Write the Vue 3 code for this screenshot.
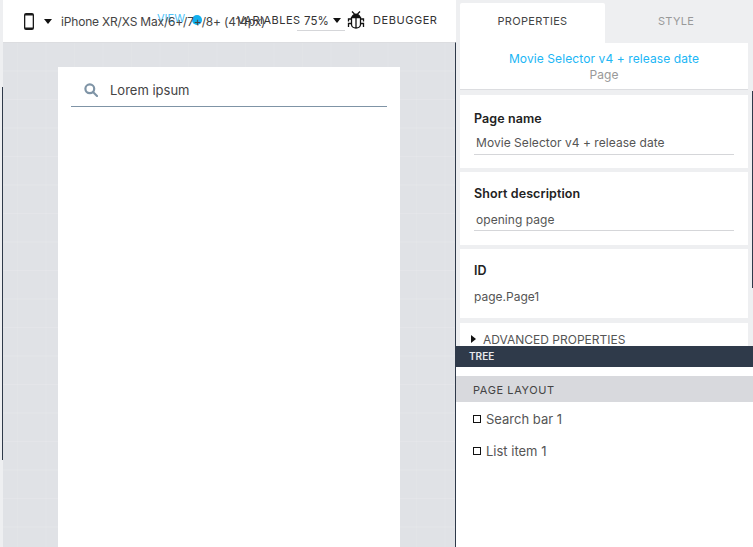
<script setup>
const cards = [
  { label: 'Page name', value: 'Movie Selector v4 + release date', field: true, cls: 'c-name' },
  { label: 'Short description', value: 'opening page', field: true, cls: 'c-desc' },
  { label: 'ID', value: 'page.Page1', field: false, cls: 'c-id' }
]
const items = ['Search bar 1', 'List item 1']
</script>

<template>
  <div class="app">
    <section class="left">
      <header class="toolbar">
        <svg class="phone" width="10" height="17" viewBox="0 0 10 17">
          <path fill="#1a1a1a" fill-rule="evenodd" d="M2 0h6a2 2 0 0 1 2 2v13a2 2 0 0 1-2 2H2a2 2 0 0 1-2-2V2a2 2 0 0 1 2-2zM1.300 2.500v12h7.400v-12z" />
        </svg>
        <span class="caret first"></span>
        <div class="overlay">
          <span class="view">VIEW</span>
          <span class="dot"></span>
          <span class="vars">VARIABLES</span>
        </div>
        <span class="device">iPhone XR/XS Max/6+/7+/8+ (414px)</span>
        <div class="zoom"><span>75%</span><span class="caret"></span></div>
        <svg class="bug" width="18" height="18" viewBox="0 0 18 18" fill="none" stroke="#111" stroke-width="1.300">
          <path d="M5 .5l2.500 2.500M13 .5l-2.500 2.500" />
          <path fill="#111" stroke="none" d="M4.500 6c.5-2.300 2.300-3.500 4.500-3.500s4 1.200 4.500 3.500z" />
          <path d="M4.500 6.500h9v7c0 2-2 3.500-4.500 3.500s-4.500-1.500-4.500-3.500zM9 6.500V17" />
          <path d="M4.500 8H1.500v2.500M13.500 8h3v2.500M4.500 12.500H1.500V16M13.500 12.500h3V16" />
        </svg>
        <span class="debugger">DEBUGGER</span>
      </header>
      <main class="canvas">
        <i class="edge"></i>
        <div class="screen">
          <div class="search">
            <svg width="14" height="14" viewBox="0 0 14 14" fill="none" stroke="#7f94a6" stroke-width="2.200">
              <circle cx="5.800" cy="5.800" r="4.400" />
              <path d="M9 9l4 4" stroke-linecap="round" />
            </svg>
            <span>Lorem ipsum</span>
          </div>
        </div>
      </main>
    </section>

    <aside class="right">
      <i class="scroll"></i>
      <div class="props">
        <nav class="tabs">
          <div class="tab active">PROPERTIES</div>
          <div class="tab style">STYLE</div>
        </nav>
        <div class="heading">
          <div class="title">Movie Selector v4 + release date</div>
          <div class="sub">Page</div>
        </div>
        <div v-for="c in cards" :key="c.label" class="card" :class="c.cls">
          <div class="label">{{ c.label }}</div>
          <div :class="c.field ? 'field' : 'plain'">{{ c.value }}</div>
        </div>
        <div class="card advanced"><i class="tri"></i>ADVANCED PROPERTIES</div>
      </div>
      <div class="treebar">TREE</div>
      <div class="tree">
        <div class="layout">PAGE LAYOUT</div>
        <div v-for="i in items" :key="i" class="item"><i class="box"></i>{{ i }}</div>
      </div>
    </aside>
  </div>
</template>

<style>
html, body { margin: 0; background: #fff; overflow: hidden; }
</style>

<style scoped>
.app {
  display: grid;
  grid-template-columns: 456px 297px;
  width: 753px;
  height: 547px;
  overflow: hidden;
  font-family: Inter, "Liberation Sans", sans-serif;
  color: #333;
}
.left {
  display: flex;
  flex-direction: column;
  padding-left: 3px;
  background: #eeeff1;
}
.toolbar {
  position: relative;
  flex: 0 0 42px;
  display: flex;
  align-items: center;
  background: #fff;
  box-sizing: border-box;
  padding-left: 21px;
  font-size: 12px;
  white-space: nowrap;
}
.phone { flex: none; }
.caret {
  display: inline-block;
  width: 0;
  height: 0;
  border-left: 4.500px solid transparent;
  border-right: 4.500px solid transparent;
  border-top: 5px solid #111;
}
.caret.first { margin-left: 10px; }
.device { position: relative; margin-left: 9px; color: #444; letter-spacing: -.18px; }
.overlay { position: absolute; left: 0; top: 0; }
.view { position: absolute; left: 154px; top: 11px; color: #4fc3f7; font-size: 11px; }
.dot { position: absolute; left: 189px; top: 15px; width: 10px; height: 10px; border-radius: 50%; background: #12b0ee; }
.vars { position: absolute; left: 234px; top: 13px; color: #333; font-size: 11px; letter-spacing: .5px; }
.zoom {
  position: absolute;
  left: 294px;
  top: 8px;
  width: 48px;
  height: 23px;
  box-sizing: border-box;
  display: flex;
  align-items: center;
  justify-content: space-between;
  padding: 3px 0 0 7px;
  border-bottom: 1px solid #d5d6d9;
  font-size: 11.500px;
}
.zoom .caret { margin-right: 4px; margin-left: 3px; }
.bug { position: absolute; left: 344px; top: 11px; }
.debugger { position: absolute; left: 370px; top: 13px; font-size: 11px; letter-spacing: .55px; }
.canvas {
  position: relative;
  flex: 1;
  min-height: 0;
  box-sizing: border-box;
  background-color: #e0e2e6;
  background-image:
    linear-gradient(rgba(255, 255, 255, .12) 1px, transparent 1px),
    linear-gradient(90deg, rgba(255, 255, 255, .06) 1px, transparent 1px);
  background-size: 28.500px 28.500px;
  background-position: 14px -1px;
  border-top: 1px solid #dcdde0;
  border-right: 1px solid #2f3a4a;
  padding-left: 55px;
  padding-top: 24px;
}
.edge { position: absolute; left: -1px; top: 44px; width: 1px; height: 373px; background: #2f3a4a; }
.screen {
  box-sizing: border-box;
  width: 342px;
  height: 500px;
  padding: 0 13px;
  background: #fff;
}
.search {
  display: flex;
  align-items: center;
  gap: 12px;
  height: 40px;
  box-sizing: border-box;
  padding: 7px 0 0 13px;
  border-bottom: 1px solid #7f94a6;
  font-size: 13px;
  color: #444;
}
.right {
  position: relative;
  display: flex;
  flex-direction: column;
  min-width: 0;
}
.scroll { position: absolute; right: 0; top: 91px; width: 1px; height: 197px; background: #2f3a4a; }
.props {
  flex: 0 0 346px;
  overflow: hidden;
  box-sizing: border-box;
  background: #eeeff1;
  padding: 3px 5px 0 4px;
}
.tabs { display: flex; height: 40px; margin-right: -5px; }
.tab {
  flex: 1;
  display: flex;
  align-items: center;
  justify-content: center;
  padding-bottom: 4px;
  box-sizing: border-box;
  font-size: 11px;
  color: #999;
  letter-spacing: .3px;
}
.tab.style { padding-right: 6px; }
.tab.active { flex: 0 0 145px; background: #fff; color: #444; border-radius: 2px 2px 0 0; }
.heading {
  height: 47px;
  background: #fff;
  text-align: center;
  box-sizing: border-box;
  padding-top: 8px;
  border-bottom: 1px solid #dcdde0;
  line-height: 16px;
  font-size: 12px;
  letter-spacing: .1px;
}
.title { color: #20b6f5; }
.sub { color: #999; }
.card {
  background: #fff;
  box-sizing: border-box;
  margin-top: 5px;
  padding: 15px 14px 0;
}
.c-name { height: 73px; }
.c-desc { height: 73px; margin-top: 4px; padding-top: 13px; }
.c-desc .field { margin-top: 9px; padding-bottom: 2px; }
.c-id { height: 69px; margin-top: 4px; padding-top: 13px; }
.label { font-size: 12.500px; font-weight: 600; color: #222; line-height: 18px; letter-spacing: .1px; }
.field {
  margin-top: 7px;
  padding: 0 2px 3px;
  font-size: 12px;
  line-height: 16px;
  color: #555;
  border-bottom: 1px solid #d5d6d9;
  letter-spacing: .05px;
}
.plain { margin-top: 9px; font-size: 12px; line-height: 16px; color: #555; }
.advanced {
  height: 40px;
  padding: 9px 0 0 11px;
  font-size: 12px;
  color: #555;
  display: flex;
  align-items: flex-start;
  line-height: 16px;
}
.tri {
  width: 0;
  height: 0;
  margin: 3px 7px 0 0;
  border-top: 4px solid transparent;
  border-bottom: 4px solid transparent;
  border-left: 5px solid #111;
}
.treebar {
  flex: 0 0 21px;
  background: #2f3a4a;
  color: #e8e9ec;
  font-size: 10px;
  font-weight: 600;
  line-height: 21px;
  padding-left: 13px;
}
.tree { flex: 1; background: #fff; padding-top: 9px; }
.layout {
  height: 26px;
  line-height: 28px;
  background: #d8d9dd;
  padding-left: 17px;
  font-size: 11px;
  color: #444;
  letter-spacing: .6px;
}
.item {
  display: flex;
  align-items: center;
  height: 32px;
  padding-left: 17px;
  font-size: 13px;
  color: #555;
  position: relative;
  top: 1px;
}
.box {
  width: 6px;
  height: 6px;
  border: 1px solid #111;
  margin-right: 5px;
}
</style>
